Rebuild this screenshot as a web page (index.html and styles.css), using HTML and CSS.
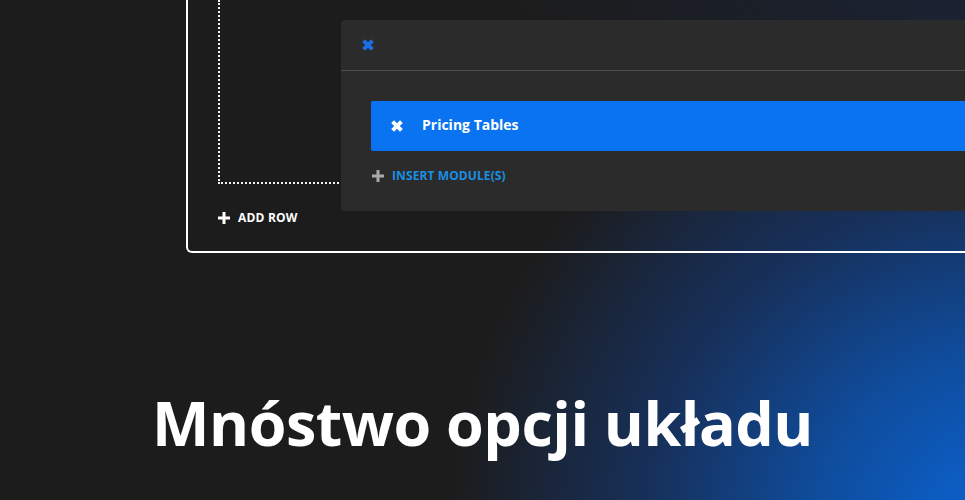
FILE: index.html
```html
<!DOCTYPE html>
<html lang="pl">
  <head>
    <meta charset="UTF-8" />
    <meta name="viewport" content="width=device-width, initial-scale=1.0" />
    <title>Mnóstwo opcji układu</title>
    <link rel="stylesheet" href="styles.css">
  </head>
  <body>
    <div class="stage">
      <div class="frame">
        <div class="drop-zone"></div>
        <div class="add-row">
          <svg class="plus" viewBox="0 0 12 12"><path d="M4.5 0h3v4.5H12v3H7.5V12h-3V7.5H0v-3h4.5z" /></svg>
          <span>ADD ROW</span>
        </div>
      </div>

      <div class="panel">
        <div class="panel-head">
          <svg class="cross cross-blue" viewBox="0 0 12 12"><path d="M3 0.2L6 3.2 9 0.2 11.8 3 8.8 6 11.8 9 9 11.8 6 8.8 3 11.8 0.2 9 3.2 6 0.2 3z" /></svg>
        </div>
        <div class="panel-body">
          <div class="module">
            <svg class="cross" viewBox="0 0 12 12"><path d="M3 0.2L6 3.2 9 0.2 11.8 3 8.8 6 11.8 9 9 11.8 6 8.8 3 11.8 0.2 9 3.2 6 0.2 3z" /></svg>
            <span>Pricing Tables</span>
          </div>
          <div class="insert">
            <svg class="plus plus-grey" viewBox="0 0 12 12"><path d="M4.5 0h3v4.5H12v3H7.5V12h-3V7.5H0v-3h4.5z" /></svg>
            <span>INSERT MODULE(S)</span>
          </div>
        </div>
      </div>
    </div>

    <h1 class="headline">Mnóstwo opcji układu</h1>
  </body>
</html>
```

FILE: styles.css
```css
html,
body {
  height: 100%;
}
body {
  margin: 0;
  overflow: hidden;
  font-family: "Open Sans", "Noto Sans", sans-serif;
  color: #fff;
  background-color: #1c1c1c;
  background-image:
    radial-gradient(ellipse 560px 520px at 1010px 530px, #0a66d8 0%, #0f4c9c 35%, #17305a 65%, rgba(28, 28, 28, 0) 100%),
    linear-gradient(250deg, #1a2232 0%, rgba(28, 28, 28, 0) 40%);
}
.stage {
  position: relative;
  height: 253px;
  overflow: hidden;
}
.frame {
  margin-left: 186px;
  width: 900px;
  height: 253px;
  border: 2px solid #fff;
  border-top: none;
  border-radius: 0 0 0 6px;
  padding-left: 30px;
  box-sizing: border-box;
}
.drop-zone {
  width: 700px;
  height: 184px;
  border: 2px dotted #f2f2f2;
  border-top: none;
  border-right: none;
  box-sizing: border-box;
}
.add-row {
  display: flex;
  align-items: center;
  gap: 8px;
  margin-top: 28px;
  font-size: 12px;
  font-weight: 700;
  letter-spacing: 0.2px;
  line-height: 12px;
}
.plus {
  width: 12px;
  height: 12px;
  fill: #fff;
}
.plus-grey {
  fill: #a9a9a9;
}
.panel {
  position: absolute;
  left: 341px;
  top: 20px;
  width: 700px;
  height: 191px;
  background: #2b2b2b;
  border-radius: 4px;
}
.panel-head {
  height: 50px;
  border-bottom: 1px solid #4d4d4d;
  padding-left: 21px;
  display: flex;
  align-items: center;
}
.cross {
  width: 12px;
  height: 12px;
  fill: #fff;
}
.cross-blue {
  fill: #1a6fe6;
}
.panel-body {
  padding: 30px 0 0 30px;
}
.module {
  height: 50px;
  background: #0a73f2;
  border-radius: 2px;
  display: flex;
  align-items: center;
  padding-left: 20px;
  gap: 19px;
  font-size: 14px;
  font-weight: 700;
}
.module span {
  margin-bottom: 3px;
}
.insert {
  display: flex;
  align-items: center;
  gap: 8px;
  margin-top: 19px;
  padding-left: 1px;
  font-size: 12px;
  font-weight: 700;
  line-height: 12px;
  color: #1a8fe3;
  letter-spacing: 0.1px;
}
.headline {
  margin: 135px 0 0;
  text-align: center;
  font-size: 61px;
  font-weight: 700;
  line-height: 70px;
  letter-spacing: -0.5px;
}
```
